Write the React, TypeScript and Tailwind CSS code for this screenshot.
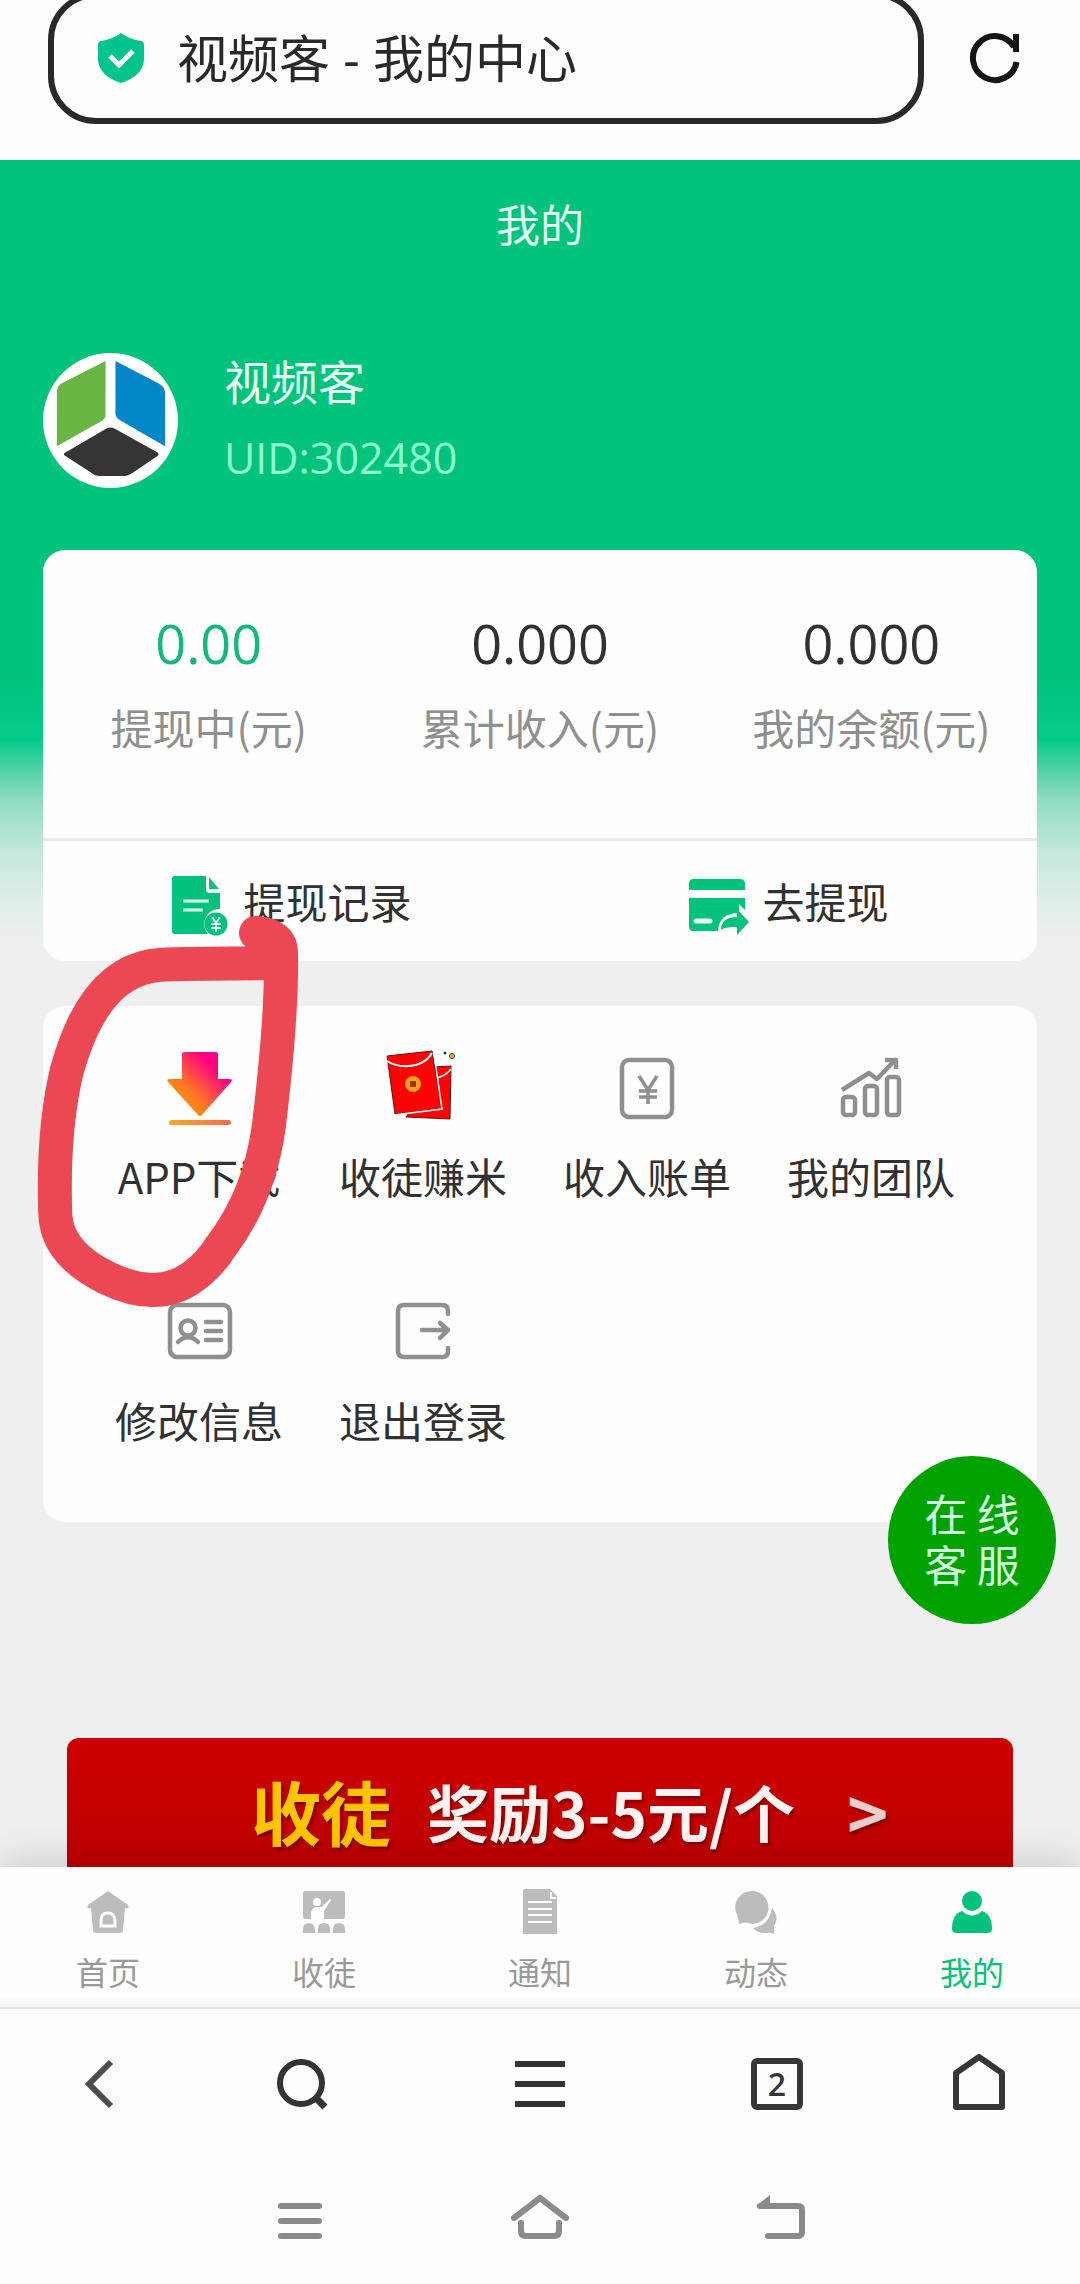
import type { ReactNode } from 'react';

function ShieldIcon() {
  return (
    <svg viewBox="0 0 48 52" className="w-12 h-[52px] shrink-0">
      <path
        d="M24 1c5 4 13 7 20 8 2 .4 3 2 3 4v14c0 12-10 20-23 24C11 47 1 39 1 27V13c0-2 1-3.600 3-4C11 8 19 5 24 1Z"
        fill="#00c48c"
      />
      <path d="m13 24 9 9 14-14" fill="none" stroke="#fff" strokeWidth="5" />
    </svg>
  );
}

function RefreshIcon() {
  return (
    <svg viewBox="0 0 52 52" className="w-[52px] h-[52px]" fill="none" stroke="#151517" strokeWidth="6">
      <path d="M47.600 30A22 22 0 1 1 45 15" />
      <path d="M47 2v18" />
    </svg>
  );
}

function LogoIcon() {
  return (
    <svg viewBox="0 0 136 136" className="w-[135px] h-[135px] rounded-full bg-white shrink-0">
      <path d="M63 8v55q0 3-3 5L14 94V40q0-6 4-9Z" fill="#69b544" />
      <path d="m73 8 44 23q6 4 6 9v54L78 68q-5-3-5-7Z" fill="#0387c9" />
      <path d="M64 76q4-2 8 0l43 24q3 2 0 4l-25 17q-4 3-7 3H56q-4 0-7-3l-26-17q-4-2 0-4Z" fill="#383436" />
    </svg>
  );
}

function RecordIcon() {
  return (
    <svg viewBox="0 -8 58 72" className="w-[58px] h-[72px]">
      <path d="M4 3h31v13q0 4 4 4h10v16a15 15 0 0 0-12 25H4q-3 0-3-3V6q0-3 3-3Z" fill="#04c27b" />
      <path d="m38 4 10 12H38Z" fill="#04c27b" />
      <path d="M12 28h26M12 37h20" stroke="#d8fff0" strokeWidth="3" />
      <circle cx="45" cy="51" r="11.500" fill="#04c27b" />
      <path d="m41 44 4 6 4-6M45 50v9M40 51h10M40 55h10" stroke="#d8fff0" strokeWidth="2" fill="none" />
    </svg>
  );
}

function WithdrawIcon() {
  return (
    <svg viewBox="0 -8 62 72" className="w-[62px] h-[72px]" fill="#04c27b">
      <path d="M5 6h47q5 0 5 5v6H1v-6q0-5 4-5Z" />
      <path d="M1 25h56v12l-6-6v9q-20 0-21 18H5q-4 0-4-4Z" />
      <path d="M8 48h14" stroke="#e4fff5" strokeWidth="5" strokeLinecap="round" />
      <path d="M33 57c0-9 6-13 16-13v-8l12 13-12 13v-8c-7 0-11 0-16 3Z" />
    </svg>
  );
}

function DownloadIcon() {
  return (
    <svg viewBox="0 0 72 80" className="w-[72px] h-20">
      <defs>
        <linearGradient id="download" x1="0.15" y1="0.85" x2="0.75" y2="0.25">
          <stop offset="0" stopColor="#ff9d00" />
          <stop offset="0.4" stopColor="#ff7326" />
          <stop offset="1" stopColor="#fb0083" />
        </linearGradient>
        <linearGradient id="downloadLine" x1="0" y1="0" x2="1" y2="0">
          <stop offset="0" stopColor="#f3ab20" />
          <stop offset="1" stopColor="#f36d54" />
        </linearGradient>
      </defs>
      <path
        d="M21 4h32q2 0 2 2v25h11q4 0 2 3L39 67q-2 2-4 0L5 34q-2-3 2-3h12V6q0-2 2-2Z"
        fill="url(#download)"
      />
      <rect x="6" y="72" width="62" height="5" rx="2.500" fill="url(#downloadLine)" />
    </svg>
  );
}

function EnvelopeIcon() {
  return (
    <svg viewBox="3 0 72 80" className="w-[72px] h-20 overflow-visible">
      <path d="m50 19 17-1-1 53-44-2 3-4 33-6Z" fill="#fa0505" stroke="#6d1010" />
      <path d="M53 30q10-3 14-9" fill="none" stroke="#fff" strokeWidth="1.500" />
      <path d="m3 8 45-5 10 58-47 5Z" fill="#fa0505" stroke="#6d1010" />
      <path d="M3 13q9 6 22 5 16-1 23-13" fill="none" stroke="#fff" strokeWidth="2" />
      <path d="m50 6 8 55-48 6" fill="none" stroke="#fff" strokeWidth="1.500" />
      <circle cx="29" cy="36" r="8" fill="#f7a11d" />
      <path d="M26 33h6v6h-6Z" fill="#a33605" />
      <circle cx="61" cy="5" r="1.500" fill="#333" />
      <circle cx="68" cy="8" r="2.500" fill="#d9b04c" stroke="#57471f" />
    </svg>
  );
}

function BillIcon() {
  return (
    <svg viewBox="0 0 72 80" className="w-[72px] h-20" fill="none" stroke="#8f8f8f" strokeWidth="4.500">
      <rect x="11" y="12" width="50" height="57" rx="7" />
      <path d="m28 28 9 14 9-14M37 41v15M28 43h18M28 49h18" strokeWidth="3.500" />
    </svg>
  );
}

function TeamIcon() {
  return (
    <svg
      viewBox="0 0 72 80"
      className="w-[72px] h-20"
      fill="none"
      stroke="#8f8f8f"
      strokeWidth="4.500"
      strokeLinejoin="round"
    >
      <rect x="8" y="49" width="12" height="18" rx="3" />
      <rect x="30" y="38" width="12" height="29" rx="3" />
      <rect x="52" y="29" width="12" height="38" rx="3" />
      <path d="m7 42 27-17 8 6 18-19M50 12h11v9" />
    </svg>
  );
}

function ProfileIcon() {
  return (
    <svg
      viewBox="0 0 72 80"
      className="w-[72px] h-20"
      fill="none"
      stroke="#8f8f8f"
      strokeWidth="4.500"
      strokeLinecap="round"
    >
      <rect x="7" y="13" width="60" height="52" rx="7" />
      <circle cx="25" cy="36" r="7.500" />
      <path d="M15 50q10-10 20 0M43 30h15M43 39h15M43 48h15" />
    </svg>
  );
}

function LogoutIcon() {
  return (
    <svg
      viewBox="0 0 72 80"
      className="w-[72px] h-20"
      fill="none"
      stroke="#8f8f8f"
      strokeWidth="4.500"
      strokeLinecap="round"
      strokeLinejoin="round"
    >
      <path d="M61 22v-3q0-6-6-6H17q-6 0-6 6v40q0 6 6 6h38q6 0 6-6v-3" />
      <path d="M35 38h25M53 31l8 7-8 8" />
    </svg>
  );
}

const HomeTabIcon = () => (
  <svg viewBox="0 0 44 46" className="w-11 h-[46px]" fill="currentColor">
    <path d="m22 2 20 14q2 4-3 3l-2 22q0 3-3 3H10q-3 0-3-3L5 19q-5 1-3-3Z" />
    <path d="M15 37v-6q0-7 7-7 6 0 7 7v6Z" fill="#bcbdbb" stroke="#fff" strokeWidth="3" />
  </svg>
);

const RecruitTabIcon = () => (
  <svg viewBox="0 0 44 46" className="w-11 h-[46px]" fill="currentColor">
    <rect x="1" y="2" width="42" height="28" rx="2" />
    <circle cx="15" cy="13" r="4" fill="#fff" />
    <path d="M9 31v-7q1-6 6-6h5l8-8 1 1-7 11v9Z" fill="#fff" />
    <path d="M1 44v-4q0-6 6-6 5 0 6 6v4ZM16 44v-4q0-6 6-6t6 6v4ZM31 44v-4q0-6 6-6t6 6v4Z" />
  </svg>
);

const NoticeTabIcon = () => (
  <svg viewBox="0 0 44 46" className="w-11 h-[46px]" fill="currentColor">
    <path d="M6 0h26l7 7v38H5V1Z" />
    <path d="M10 13h24M10 20h24M10 26h24M10 33h24M33 3v6h5" stroke="#fff" strokeWidth="2" fill="none" />
  </svg>
);

const MomentsTabIcon = () => (
  <svg viewBox="0 0 44 46" className="w-11 h-[46px]" fill="currentColor">
    <path d="M18 2a16.500 16.500 0 1 1 0 33Q11 32 5 35q0-5-2-9A16.500 16.500 0 0 1 18 2Z" />
    <path d="M38 19q8 10 2 18v8q-4-2-8-1-9 0-13-5 16-2 19-20Z" />
  </svg>
);

const MineTabIcon = () => (
  <svg viewBox="0 0 44 46" className="w-11 h-[46px]" fill="currentColor">
    <circle cx="22" cy="12" r="10" />
    <path d="M12 22q10 9 20 0 10 3 10 18 0 4-5 4H7q-5 0-5-4 0-15 10-18Z" />
  </svg>
);

// pen stroke drawn round the download entry
function PenMark() {
  return (
    <svg
      viewBox="30 910 280 410"
      className="absolute -left-[13px] -top-24 w-[280px] h-[410px] pointer-events-none"
      fill="none"
      stroke="#ec4853"
      strokeWidth="34"
      strokeLinecap="round"
    >
      <path d="M256 933C270 934 281 939 281 953C282 1010 275 1075 269 1125C263 1170 247 1212 222 1245C204 1273 180 1290 153 1290C123 1290 86 1270 70 1251C57 1236 55 1222 55 1205C54 1160 56 1115 67 1070C77 1035 91 1002 116 982C139 964 160 964 185 964L274 963" />
    </svg>
  );
}

const stats = [
  { value: '0.00', label: '提现中(元)', color: 'text-[#12b97a]' },
  { value: '0.000', label: '累计收入(元)', color: 'text-[#303133]' },
  { value: '0.000', label: '我的余额(元)', color: 'text-[#303133]' },
];

const menu: { label: string; icon: ReactNode }[] = [
  { label: 'APP下载', icon: <DownloadIcon /> },
  { label: '收徒赚米', icon: <EnvelopeIcon /> },
  { label: '收入账单', icon: <BillIcon /> },
  { label: '我的团队', icon: <TeamIcon /> },
  { label: '修改信息', icon: <ProfileIcon /> },
  { label: '退出登录', icon: <LogoutIcon /> },
];

const tabs: { label: string; icon: ReactNode; active?: boolean }[] = [
  { label: '首页', icon: <HomeTabIcon /> },
  { label: '收徒', icon: <RecruitTabIcon /> },
  { label: '通知', icon: <NoticeTabIcon /> },
  { label: '动态', icon: <MomentsTabIcon /> },
  { label: '我的', icon: <MineTabIcon />, active: true },
];

function AddressBar() {
  return (
    <header className="h-40 overflow-hidden bg-[#fdfdfd]">
      <div className="flex items-center gap-[45px] pl-12 pr-[59px] -mt-2">
        <div className="flex-1 flex items-center gap-8 h-[132px] pl-[43px] pr-8 border-[6px] border-[#29292b] rounded-[48px]">
          <ShieldIcon />
          <input
            type="text"
            readOnly
            aria-label="地址栏"
            value="视频客 - 我的中心"
            className="flex-1 min-w-0 bg-transparent font-['Open_Sans','Noto_Sans_CJK_SC',sans-serif] text-[51px] leading-[72px] text-[#29292b] outline-none"
          />
        </div>
        <button aria-label="刷新">
          <RefreshIcon />
        </button>
      </div>
    </header>
  );
}

function BalanceCard() {
  return (
    <section className="mx-[43px] bg-[#fefefe] rounded-[22px]">
      <div className="grid grid-cols-3 pt-[61px] pb-[81px] text-center">
        {stats.map((item) => (
          <div key={item.label} className="flex flex-col gap-[22px]">
            <span className={`font-['Open_Sans',sans-serif] text-[54px] leading-[64px] ${item.color}`}>
              {item.value}
            </span>
            <span className="text-[42px] leading-[60px] text-[#8f8f8f]">{item.label}</span>
          </div>
        ))}
      </div>
      <div className="grid grid-cols-2 h-[123px] border-t-[3px] border-[#e8e8e8] text-[42px] leading-[60px] text-[#303133]">
        <a href="#records" className="flex items-center justify-center gap-3.5">
          <RecordIcon />
          提现记录
        </a>
        <a href="#withdraw" className="flex items-center justify-center gap-3">
          <WithdrawIcon />
          去提现
        </a>
      </div>
    </section>
  );
}

function MenuCard() {
  return (
    <section className="relative mx-[43px] mt-[45px] pt-[42px] pb-[70px] pl-11 pr-[54px] bg-[#fefefe] rounded-[22px]">
      <div className="grid grid-cols-4 gap-y-[84px]">
        {menu.map((item) => (
          <a key={item.label} href="#menu" className="flex flex-col items-center gap-5">
            {item.icon}
            <span className="text-[42px] leading-[56px] pb-1 text-[#303133] whitespace-nowrap">{item.label}</span>
          </a>
        ))}
      </div>
      <PenMark />
      <button className="absolute -right-[19px] -bottom-[102px] w-[168px] h-[168px] px-7 pb-1 rounded-full bg-[#00a200] text-[43px] leading-[51px] text-[#d2fbdc]">
        在 线 客 服
      </button>
    </section>
  );
}

function TabBar() {
  return (
    <nav className="relative h-[142px] grid grid-cols-5 bg-linear-to-b from-[#fefefe] from-92% to-[#f3f3f3] border-b-2 border-[#e4e4e4] shadow-[0_-4px_36px_rgba(0,0,0,0.16)]">
      {tabs.map((tab) => (
        <a
          key={tab.label}
          href="#tab"
          className={`flex flex-col items-center gap-3 pt-[22px] ${tab.active ? 'text-[#04c27b]' : 'text-[#bcbdbb]'}`}
        >
          {tab.icon}
          <span className={`text-[32px] leading-[48px] ${tab.active ? '' : 'text-[#999999]'}`}>{tab.label}</span>
        </a>
      ))}
    </nav>
  );
}

function BrowserBar() {
  return (
    <nav className="relative h-[149px] grid grid-cols-[33fr_35fr_44fr_35fr_33fr] place-items-center bg-[#fdfdfd]">
      <button aria-label="后退">
        <svg viewBox="0 0 60 60" className="w-[60px] h-[60px]" fill="none" stroke="#4c4c4c" strokeWidth="6">
          <path d="M42 8 20 30l22 22" />
        </svg>
      </button>
      <button aria-label="搜索">
        <svg viewBox="0 0 60 60" className="w-[60px] h-[60px]" fill="none" stroke="#333" strokeWidth="6">
          <circle cx="28" cy="29" r="21" />
          <path d="m43 44 9 9" strokeWidth="7" />
        </svg>
      </button>
      <button aria-label="菜单">
        <svg viewBox="0 0 60 60" className="w-[60px] h-[60px]" stroke="#333" strokeWidth="6">
          <path d="M5 10h50M5 30h50M5 50h50" />
        </svg>
      </button>
      <button
        aria-label="标签页"
        className="w-[52px] h-[52px] border-[6px] border-[#363636] rounded-md font-['Open_Sans',sans-serif] text-[32px] leading-[40px] font-semibold text-[#363636]"
      >
        2
      </button>
      <button aria-label="主页">
        <svg
          viewBox="0 0 60 60"
          className="w-[60px] h-[60px]"
          fill="none"
          stroke="#363636"
          strokeWidth="6"
          strokeLinejoin="round"
        >
          <path d="M5 19 28 3l23 16v34H5Z" />
        </svg>
      </button>
    </nav>
  );
}

function SystemBar() {
  return (
    <nav className="h-[126px] bg-[#fdfdfd]">
      <div className="w-2/3 mx-auto pt-8 grid grid-cols-3 justify-items-center">
        <button aria-label="最近任务">
          <svg viewBox="0 0 60 60" className="w-[60px] h-[60px]" stroke="#8a8a8a" strokeWidth="6" strokeLinecap="round">
            <path d="M11 16h38M11 31h38M11 46h38" />
          </svg>
        </button>
        <button aria-label="桌面">
          <svg
            viewBox="0 0 60 60"
            className="w-[60px] h-[60px]"
            fill="none"
            stroke="#8a8a8a"
            strokeWidth="6"
            strokeLinecap="round"
          >
            <path d="M4 28 30 8l26 20M11 33v8q0 5 5 5h28q5 0 5-5v-8" />
          </svg>
        </button>
        <button aria-label="返回">
          <svg viewBox="0 0 60 60" className="w-[60px] h-[60px]" fill="none" stroke="#8a8a8a" strokeWidth="6">
            <path d="M10 16h38q4 0 4 4v22q0 4-4 4H18" strokeLinecap="round" />
            <path d="M6 16 20 5v12Z" fill="#8a8a8a" stroke="none" />
          </svg>
        </button>
      </div>
    </nav>
  );
}

export default function App() {
  return (
    <div className="overflow-hidden font-['Noto_Sans_CJK_SC',sans-serif]">
      <AddressBar />
      <main className="bg-[#efefef] bg-[linear-gradient(to_bottom,#01c37c_0,#01c37c_520px,#04cb8d_580px,#50d3a6_610px,#8fddc0_640px,#c3e8d9_690px,#e0eee9_740px,#efefef_790px)]">
        <h1 className="text-center text-[44px] leading-[126px] text-[#e4fff3]">我的</h1>
        <div className="flex items-center gap-[46px] px-[43px] pt-14 pb-[52px]">
          <LogoIcon />
          <div className="flex flex-col">
            <span className="text-[47px] leading-[76px] text-[#e4fff3]">视频客</span>
            <span className="font-['Open_Sans',sans-serif] text-[43px] leading-[80px] text-[#8dfbcf]">UID:302480</span>
          </div>
        </div>
        <BalanceCard />
        <MenuCard />
        <a
          href="#invite"
          className="flex items-center mx-[67px] mt-[216px] h-[129px] pt-4 pl-[184px] gap-9 rounded-t-xl bg-linear-to-b from-[#ce0000] to-[#bd0000] font-bold whitespace-nowrap [text-shadow:2px_3px_3px_rgba(90,0,0,0.6)]"
        >
          <span className="text-[70px] leading-[84px] text-[#ffc400]">收徒</span>
          <span className="text-[62px] leading-[84px] text-[#fff3f1]">奖励3-5元/个</span>
          <span className="text-[70px] leading-[84px] text-[#eccccc] pl-4">&gt;</span>
        </a>
      </main>
      <TabBar />
      <BrowserBar />
      <SystemBar />
    </div>
  );
}
